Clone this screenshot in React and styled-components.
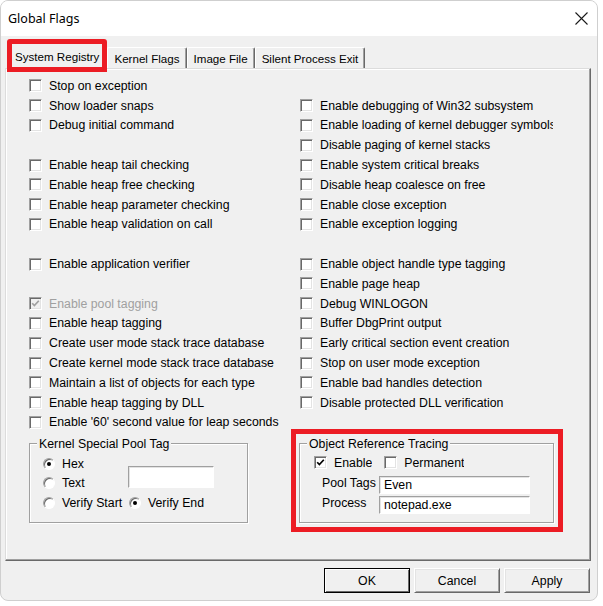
import styled, { createGlobalStyle } from "styled-components";

const GlobalStyle = createGlobalStyle`
  html, body {
    margin: 0;
    background: #ffffff;
  }
  body {
    font-family: "Liberation Sans", Arial, sans-serif;
    color: #000;
  }
  * {
    box-sizing: border-box;
  }
`;

const Window = styled.div`
  width: 598px;
  height: 601px;
  border: 1px solid #cfcfcf;
  border-radius: 8px;
  overflow: hidden;
  display: flex;
  flex-direction: column;
  background: #f0f0f0;
`;

const TitleBar = styled.div`
  height: 35px;
  flex: none;
  background: #ffffff;
  display: flex;
  align-items: center;
  justify-content: space-between;
  padding: 0 9px 0 7px;
`;

const Title = styled.div`
  font-family: "Noto Sans", "Open Sans", sans-serif;
  font-size: 12.5px;
  color: #000;
`;

const CloseIcon = () => (
  <svg width="13" height="13" viewBox="0 0 13 13">
    <path d="M0.5 0.5 L12.5 12.5 M12.5 0.5 L0.5 12.5" stroke="#1a1a1a" strokeWidth="1.1" fill="none" />
  </svg>
);

const Body = styled.div`
  flex: 1;
  display: flex;
  flex-direction: column;
  padding: 0 6px 0 4px;
`;

const TabStrip = styled.div`
  height: 32px;
  flex: none;
  display: flex;
  align-items: flex-end;
  padding-left: 3px;
`;

const Tab = styled.div`
  height: ${(p) => (p.$active ? 31 : 21)}px;
  margin: 0 ${(p) => (p.$active ? 1 : 0)}px ${(p) => (p.$active ? -3 : 0)}px 0;
  padding: 0 ${(p) => (p.$active ? 6 : 6)}px;
  display: flex;
  align-items: center;
  white-space: nowrap;
  font-size: 11.6px;
  background: #f0f0f0;
  border-top: 1px solid #ffffff;
  border-left: 1px solid #ffffff;
  border-right: 1px solid #696969;
  box-shadow: inset -1px 0 #a0a0a0;
  border-radius: 2px 2px 0 0;
  position: relative;
  z-index: ${(p) => (p.$active ? 1 : 0)};
  outline: ${(p) => (p.$active ? "5px solid #ec1c24" : "none")};
  outline-offset: -4px;
`;

const Panel = styled.div`
  height: 493px;
  flex: none;
  border-top: 1px solid #dcdcdc;
  border-left: 1px solid #dcdcdc;
  border-right: 1px solid #696969;
  border-bottom: 1px solid #696969;
  box-shadow: inset -1px -1px #a0a0a0, inset 1px 1px #ffffff;
  padding: 7px 0 0 23px;
  display: grid;
  grid-template-columns: 262px 272px;
  align-content: start;
`;

const Column = styled.div`
  display: flex;
  flex-direction: column;
`;

const CheckList = styled.div`
  display: flex;
  flex-direction: column;
  padding-left: ${(p) => p.$indent || 0}px;
  width: ${(p) => (p.$width ? `${p.$width}px` : "auto")};
`;

const Row = styled.div`
  height: 19.8px;
  display: flex;
  align-items: center;
  gap: 7px;
  font-size: 12.3px;
  white-space: nowrap;
  overflow: hidden;
  color: ${(p) => (p.$disabled ? "#a0a0a0" : "#000")};
`;

const Box = styled.span`
  width: 13px;
  height: 13px;
  flex: none;
  display: flex;
  align-items: center;
  justify-content: center;
  background: ${(p) => (p.$disabled ? "#f0f0f0" : "#ffffff")};
  border-top: 1px solid #a0a0a0;
  border-left: 1px solid #a0a0a0;
  border-right: 1px solid #ffffff;
  border-bottom: 1px solid #ffffff;
  box-shadow: inset 1px 1px #696969, inset -1px -1px #e3e3e3;
`;

const Check = ({ color }) => (
  <svg width="9" height="9" viewBox="0 0 9 9">
    <polyline points="1.2,4.2 3.4,6.6 7.8,1.8" fill="none" stroke={color} strokeWidth="1.7" />
  </svg>
);

const CheckBox = ({ label, checked, disabled }) => (
  <Row $disabled={disabled}>
    <Box $disabled={disabled}>{checked && <Check color={disabled ? "#a0a0a0" : "#000"} />}</Box>
    <span>{label}</span>
  </Row>
);

const Blank = styled.div`
  height: 19.8px;
`;

const Group = styled.fieldset`
  margin: 0;
  padding: 0;
  min-width: 0;
  border: 1px solid #a0a0a0;
  box-shadow: inset 1px 1px #ffffff, 1px 1px #ffffff;
  width: ${(p) => (p.$width ? `${p.$width}px` : "auto")};
  margin-top: ${(p) => p.$top || 0}px;
`;

const Legend = styled.legend`
  margin-left: 7px;
  padding: 0 2px;
  font-size: 12.3px;
  line-height: 14px;
  background: #f0f0f0;
`;

const PoolGrid = styled.div`
  display: grid;
  grid-template-columns: 86px 1fr;
  grid-template-rows: repeat(3, 19.5px);
  padding: 3px 0 10px 13px;
`;

const RadioRow = styled.div`
  display: flex;
  align-items: center;
  gap: 7px;
  font-size: 12.3px;
  white-space: nowrap;
`;

const Radio = styled.span`
  width: 12px;
  height: 12px;
  flex: none;
  border-radius: 50%;
  background: #ffffff;
  border: 1px solid;
  border-color: #a0a0a0 #ffffff #ffffff #a0a0a0;
  box-shadow: inset 1px 1px #696969;
  display: flex;
  align-items: center;
  justify-content: center;

  &::after {
    content: "";
    width: 4px;
    height: 4px;
    border-radius: 50%;
    background: ${(p) => (p.$on ? "#000" : "transparent")};
  }
`;

const Edit = styled.div`
  width: ${(p) => p.$width}px;
  height: ${(p) => p.$height}px;
  background: #ffffff;
  border-top: 1px solid #a0a0a0;
  border-left: 1px solid #a0a0a0;
  border-right: 1px solid #ffffff;
  border-bottom: 1px solid #ffffff;
  box-shadow: inset 1px 1px #e3e3e3;
  font-size: 12.3px;
  display: flex;
  align-items: center;
  padding-left: 4px;
  white-space: nowrap;
`;

const TagEdit = styled(Edit)`
  grid-column: 2;
  grid-row: 1 / span 2;
  margin-top: 12px;
  margin-left: -1px;
`;

const Highlight = styled.div`
  margin-top: 16.3px;
  width: 272px;
  border: 5px solid #ec1c24;
  padding: 3px 4px 4px 3px;
`;

const TraceBody = styled.div`
  padding: 4px 0 8px 14px;
  display: flex;
  flex-direction: column;
`;

const TraceChecks = styled.div`
  display: flex;
  gap: 12px;
  height: 16px;
  align-items: center;
`;

const FormGrid = styled.div`
  display: grid;
  grid-template-columns: 57px 151px;
  row-gap: 2px;
  margin: 5px 0 0 8px;
  align-items: center;
  font-size: 12.3px;
`;

const FieldLabel = styled.span`
  margin-top: -3px;
`;

const ButtonRow = styled.div`
  display: flex;
  justify-content: flex-end;
  gap: 4px;
  margin: 7px 1px 0 0;
`;

const Button = styled.button`
  width: 86px;
  height: 25px;
  font-family: "Liberation Sans", Arial, sans-serif;
  font-size: 12.3px;
  color: #000;
  background: #f0f0f0;
  padding: 0;
  border: 1px solid;
  border-color: ${(p) => (p.$default ? "#000 #000 #000 #000" : "#ffffff #696969 #696969 #ffffff")};
  box-shadow: ${(p) =>
    p.$default
      ? "inset 1px 1px #ffffff, inset -1px -1px #696969"
      : "inset 1px 1px #e3e3e3, inset -1px -1px #a0a0a0"};
`;

const leftFlags = [
  "Stop on exception",
  "Show loader snaps",
  "Debug initial command",
  null,
  "Enable heap tail checking",
  "Enable heap free checking",
  "Enable heap parameter checking",
  "Enable heap validation on call",
  null,
  "Enable application verifier",
  null,
  { label: "Enable pool tagging", checked: true, disabled: true },
  "Enable heap tagging",
  "Create user mode stack trace database",
  "Create kernel mode stack trace database",
  "Maintain a list of objects for each type",
  "Enable heap tagging by DLL",
  "Enable '60' second value for leap seconds",
];

const rightFlags = [
  null,
  "Enable debugging of Win32 subsystem",
  "Enable loading of kernel debugger symbols",
  "Disable paging of kernel stacks",
  "Enable system critical breaks",
  "Disable heap coalesce on free",
  "Enable close exception",
  "Enable exception logging",
  null,
  "Enable object handle type tagging",
  "Enable page heap",
  "Debug WINLOGON",
  "Buffer DbgPrint output",
  "Early critical section event creation",
  "Stop on user mode exception",
  "Enable bad handles detection",
  "Disable protected DLL verification",
];

const renderFlags = (list) =>
  list.map((item, i) => {
    if (item === null) return <Blank key={i} />;
    if (typeof item === "string") return <CheckBox key={i} label={item} />;
    return <CheckBox key={i} {...item} />;
  });

const tabs = ["System Registry", "Kernel Flags", "Image File", "Silent Process Exit"];

const App = () => {
  return (
    <Window>
      <GlobalStyle />
      <TitleBar>
        <Title>Global Flags</Title>
        <CloseIcon />
      </TitleBar>
      <Body>
        <TabStrip>
          {tabs.map((t, i) => (
            <Tab key={t} $active={i === 0}>
              {t}
            </Tab>
          ))}
        </TabStrip>
        <Panel>
          <Column>
            <CheckList>{renderFlags(leftFlags)}</CheckList>
            <Group $width={219} $top={4.5}>
              <Legend>Kernel Special Pool Tag</Legend>
              <PoolGrid>
                <RadioRow>
                  <Radio $on />
                  Hex
                </RadioRow>
                <TagEdit $width={86} $height={22} />
                <RadioRow>
                  <Radio />
                  Text
                </RadioRow>
                <RadioRow>
                  <Radio />
                  Verify Start
                </RadioRow>
                <RadioRow>
                  <Radio $on />
                  Verify End
                </RadioRow>
              </PoolGrid>
            </Group>
          </Column>
          <Column>
            <CheckList $indent={9} $width={262}>
              {renderFlags(rightFlags)}
            </CheckList>
            <Highlight>
              <Group>
                <Legend>Object Reference Tracing</Legend>
                <TraceBody>
                  <TraceChecks>
                    <CheckBox label="Enable" checked />
                    <CheckBox label="Permanent" />
                  </TraceChecks>
                  <FormGrid>
                    <FieldLabel>Pool Tags</FieldLabel>
                    <Edit $width={151} $height={18}>Even</Edit>
                    <FieldLabel>Process</FieldLabel>
                    <Edit $width={151} $height={18}>notepad.exe</Edit>
                  </FormGrid>
                </TraceBody>
              </Group>
            </Highlight>
          </Column>
        </Panel>
        <ButtonRow>
          <Button $default>OK</Button>
          <Button>Cancel</Button>
          <Button>Apply</Button>
        </ButtonRow>
      </Body>
    </Window>
  );
};

export default App;
